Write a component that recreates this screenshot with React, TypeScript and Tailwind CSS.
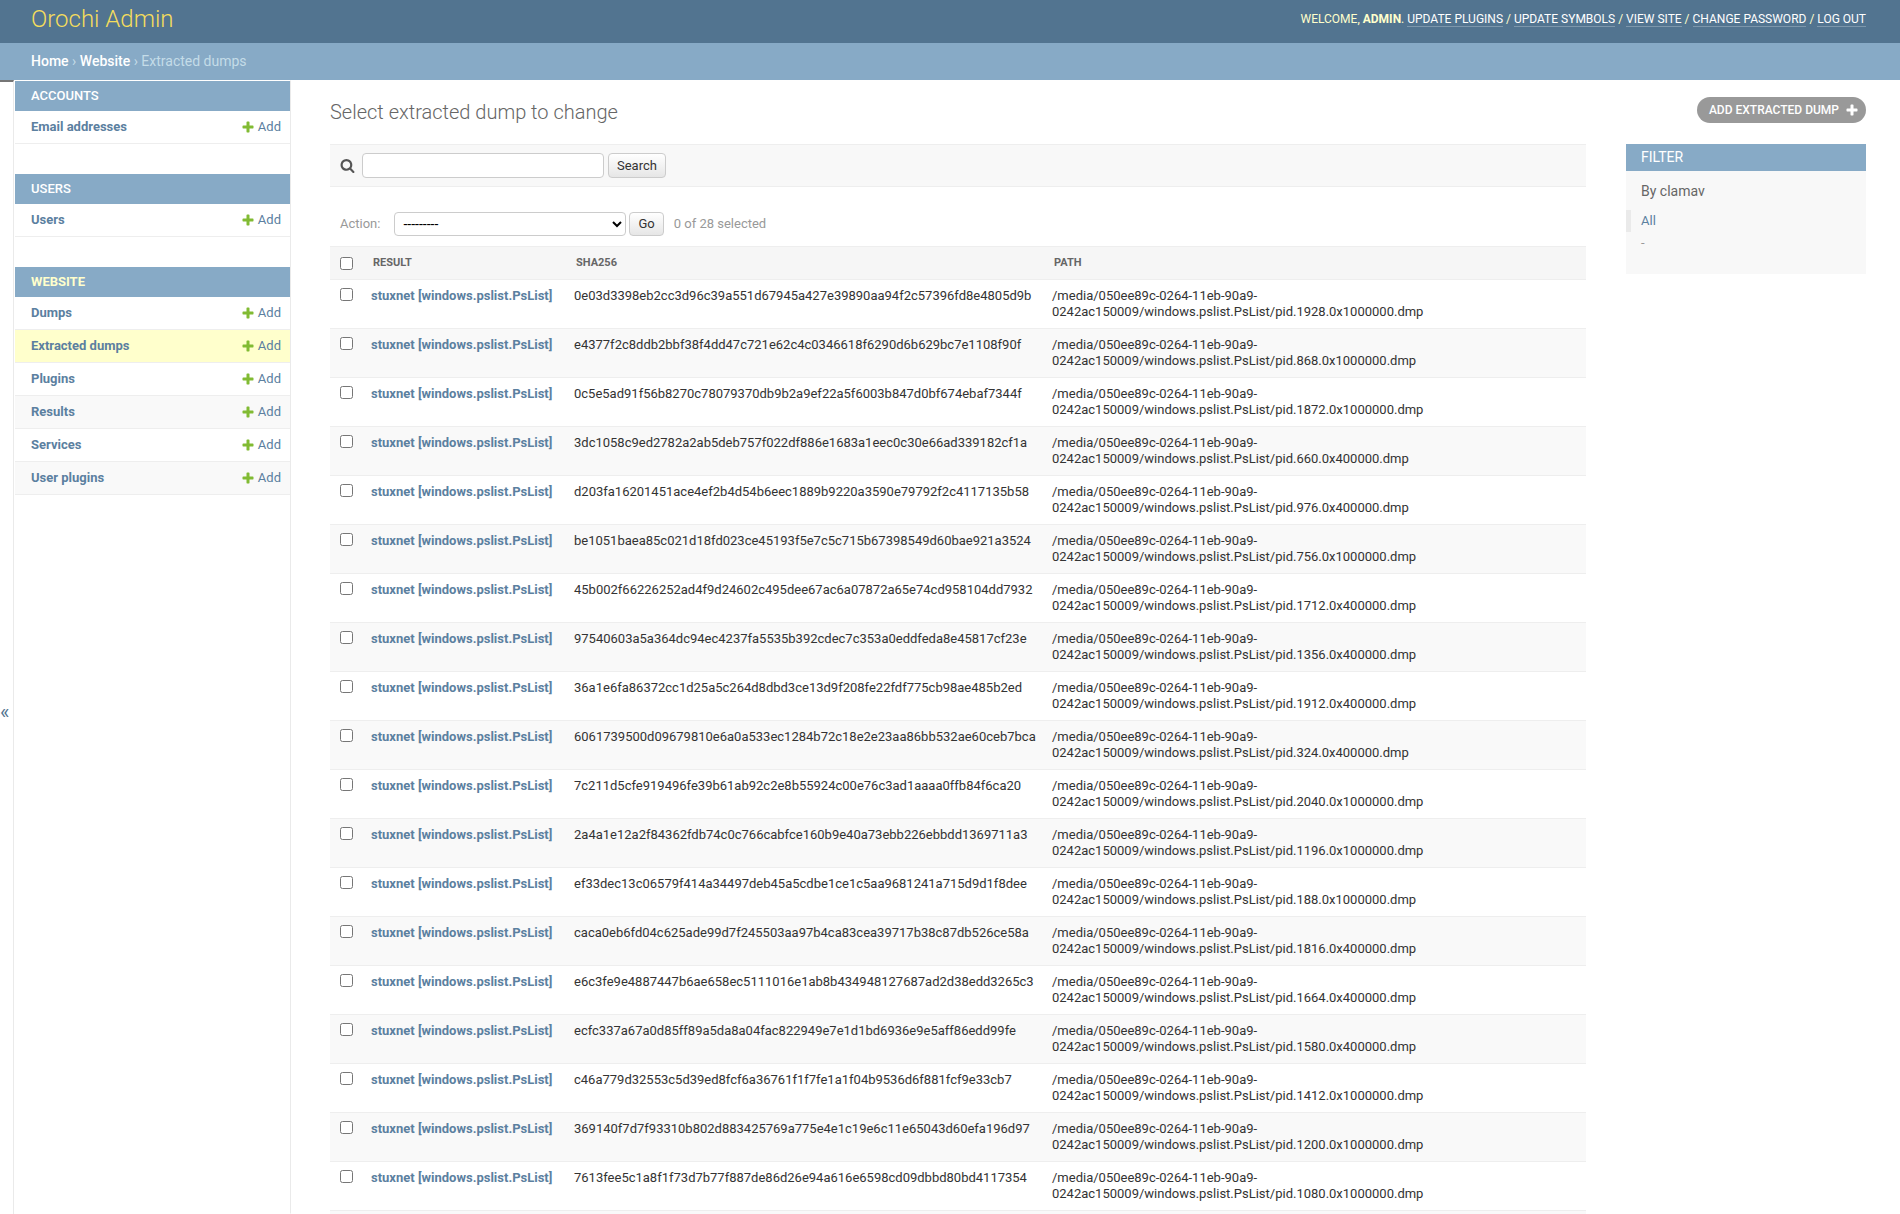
import clsx from "clsx"

const userLinks = ["Update plugins", "Update symbols", "View site", "Change password", "Log out"]

const apps = [
  { name: "Accounts", models: ["Email addresses"] },
  { name: "Users", models: ["Users"] },
  {
    name: "Website",
    current: true,
    models: ["Dumps", "Extracted dumps", "Plugins", "Results", "Services", "User plugins"],
  },
]

const dumps = [
  ["0e03d3398eb2cc3d96c39a551d67945a427e39890aa94f2c57396fd8e4805d9b", "pid.1928.0x1000000.dmp"],
  ["e4377f2c8ddb2bbf38f4dd47c721e62c4c0346618f6290d6b629bc7e1108f90f", "pid.868.0x1000000.dmp"],
  ["0c5e5ad91f56b8270c78079370db9b2a9ef22a5f6003b847d0bf674ebaf7344f", "pid.1872.0x1000000.dmp"],
  ["3dc1058c9ed2782a2ab5deb757f022df886e1683a1eec0c30e66ad339182cf1a", "pid.660.0x400000.dmp"],
  ["d203fa16201451ace4ef2b4d54b6eec1889b9220a3590e79792f2c4117135b58", "pid.976.0x400000.dmp"],
  ["be1051baea85c021d18fd023ce45193f5e7c5c715b67398549d60bae921a3524", "pid.756.0x1000000.dmp"],
  ["45b002f66226252ad4f9d24602c495dee67ac6a07872a65e74cd958104dd7932", "pid.1712.0x400000.dmp"],
  ["97540603a5a364dc94ec4237fa5535b392cdec7c353a0eddfeda8e45817cf23e", "pid.1356.0x400000.dmp"],
  ["36a1e6fa86372cc1d25a5c264d8dbd3ce13d9f208fe22fdf775cb98ae485b2ed", "pid.1912.0x400000.dmp"],
  ["6061739500d09679810e6a0a533ec1284b72c18e2e23aa86bb532ae60ceb7bca", "pid.324.0x400000.dmp"],
  ["7c211d5cfe919496fe39b61ab92c2e8b55924c00e76c3ad1aaaa0ffb84f6ca20", "pid.2040.0x1000000.dmp"],
  ["2a4a1e12a2f84362fdb74c0c766cabfce160b9e40a73ebb226ebbdd1369711a3", "pid.1196.0x1000000.dmp"],
  ["ef33dec13c06579f414a34497deb45a5cdbe1ce1c5aa9681241a715d9d1f8dee", "pid.188.0x1000000.dmp"],
  ["caca0eb6fd04c625ade99d7f245503aa97b4ca83cea39717b38c87db526ce58a", "pid.1816.0x400000.dmp"],
  ["e6c3fe9e4887447b6ae658ec5111016e1ab8b434948127687ad2d38edd3265c3", "pid.1664.0x400000.dmp"],
  ["ecfc337a67a0d85ff89a5da8a04fac822949e7e1d1bd6936e9e5aff86edd99fe", "pid.1580.0x400000.dmp"],
  ["c46a779d32553c5d39ed8fcf6a36761f1f7fe1a1f04b9536d6f881fcf9e33cb7", "pid.1412.0x1000000.dmp"],
  ["369140f7d7f93310b802d883425769a775e4e1c19e6c11e65043d60efa196d97", "pid.1200.0x1000000.dmp"],
  ["7613fee5c1a8f1f73d7b77f887de86d26e94a616e6598cd09dbbd80bd4117354", "pid.1080.0x1000000.dmp"],
]

const PlusIcon = ({ className }: { className?: string }) => (
  <svg viewBox="0 0 1792 1792" className={className} fill="currentColor" aria-hidden="true">
    <path d="M1600 796v192q0 40-28 68t-68 28h-416v416q0 40-28 68t-68 28h-192q-40 0-68-28t-28-68v-416h-416q-40 0-68-28t-28-68v-192q0-40 28-68t68-28h416v-416q0-40 28-68t68-28h192q40 0 68 28t28 68v416h416q40 0 68 28t28 68z" />
  </svg>
)

const SearchIcon = () => (
  <svg viewBox="0 0 1792 1792" className="size-[15px]" fill="#555555" aria-hidden="true">
    <path d="M1216 832q0-185-131.5-316.5t-316.5-131.5-316.5 131.5-131.5 316.5 131.5 316.5 316.5 131.5 316.5-131.5 131.5-316.5zm512 832q0 52-38 90t-90 38q-54 0-90-38l-343-342q-179 124-399 124-143 0-273.5-55.5t-225-150-150-225-55.5-273.5 55.5-273.5 150-225 225-150 273.5-55.5 273.5 55.5 225 150 150 225 55.5 273.5q0 220-124 399l343 343q37 37 37 90z" />
  </svg>
)

const Header = () => (
  <header className="flex h-[43px] flex-none items-center justify-between bg-[#527490] pr-[34px] pb-[6px] pl-[31px] text-[#ffffcc]">
    <a href="#" className="text-2xl font-light text-[#f5dd5d]">
      Orochi Admin
    </a>
    <div className="text-xs leading-4 uppercase">
      Welcome, <strong>admin</strong>.{" "}
      {userLinks.map((link, i) => (
        <span key={link}>
          {i > 0 && " / "}
          <a href="#" className="border-b border-white/25 text-white">
            {link}
          </a>
        </span>
      ))}
    </div>
  </header>
)

const Breadcrumbs = () => (
  <nav aria-label="Breadcrumbs" className="flex h-[37px] flex-none items-center bg-[#87aac6] pb-[2px] pl-[31px] text-sm text-[#c4dce8]">
    <div>
      <a href="#" className="font-medium text-white">
        Home
      </a>{" "}
      ›{" "}
      <a href="#" className="font-medium text-white">
        Website
      </a>{" "}
      › Extracted dumps
    </div>
  </nav>
)

const Sidebar = () => (
  <nav aria-label="Applications" className="w-[277px] flex-none border border-transparent border-r-[#eaeaea]">
    {apps.map((app) => (
      <section key={app.name} className="mb-[30px]">
        <h2 className="bg-[#87aac6] px-4 text-[13px] leading-[30px] font-medium text-white uppercase">
          <a href="#" className={clsx(app.current && "font-bold text-[#ffffcc]")}>
            {app.name}
          </a>
        </h2>
        <ul>
          {app.models.map((model, i) => (
            <li
              key={model}
              className={clsx(
                "flex h-[33px] items-center justify-between border-b border-[#eeeeee] pr-[9px] pl-4 text-[13px]",
                model === "Extracted dumps" ? "bg-[#ffffcc]" : i % 2 === 1 && "bg-[#f9f9f9]",
              )}
            >
              <a href="#" className="font-bold">
                {model}
              </a>
              <a href="#" aria-label={`Add ${model}`} className="flex items-center gap-[3px]">
                <PlusIcon className="size-3.5 text-[#81bb33]" />
                Add
              </a>
            </li>
          ))}
        </ul>
      </section>
    ))}
  </nav>
)

const Toolbar = () => (
  <form className="flex h-[43px] items-center border-y border-[#eeeeee] bg-[#f8f8f8] px-[10px]">
    <label htmlFor="searchbar" className="mr-[7px]">
      <SearchIcon />
    </label>
    <input
      id="searchbar"
      type="text"
      aria-label="Search"
      className="mr-1 h-[25px] w-[242px] rounded border border-[#cccccc] bg-white px-1.5"
    />
    <button type="button" className="h-[25px] rounded border border-[#cccccc] bg-linear-to-b from-white to-[#e6e6e6] px-2 text-[#333333]">
      Search
    </button>
  </form>
)

const Actions = () => (
  <div className="mt-5 mb-[5px] flex h-[34px] items-center px-[10px] text-[#999999]">
    <label htmlFor="action" className="mr-[14px]">
      Action:
    </label>
    <select
      id="action"
      className="mr-[3px] h-6 w-[232px] rounded border border-[#cccccc] bg-white pl-1 text-sm text-black"
    >
      <option>---------</option>
      <option>Delete selected extracted dumps</option>
    </select>
    <button type="button" className="mr-[10px] h-6 rounded border border-[#cccccc] bg-linear-to-b from-white to-[#e6e6e6] px-2 text-[#333333]">
      Go
    </button>
    <span>0 of 28 selected</span>
  </div>
)

const DumpTable = () => (
  <table className="w-full border-collapse text-left leading-4">
    <colgroup>
      <col className="w-[33px]" />
      <col className="w-[203px]" />
      <col className="w-[478px]" />
      <col />
    </colgroup>
    <thead>
      <tr className="h-[33px] border-y border-[#eeeeee] bg-[#f6f6f6] text-[11px] text-[#666666] uppercase">
        <th className="pl-[10px]">
          <input type="checkbox" aria-label="Select all" className="block size-[13px]" />
        </th>
        <th className="px-[10px]">Result</th>
        <th className="px-[10px]">SHA256</th>
        <th className="px-[10px]">Path</th>
      </tr>
    </thead>
    <tbody className="text-[#333333]">
      {dumps.map(([sha, file], i) => (
        <tr key={sha} className={clsx("border-b border-[#eeeeee] align-top", i % 2 === 1 && "bg-[#f9f9f9]")}>
          <td className="py-2 pl-[10px]">
            <input type="checkbox" aria-label={`Select ${file}`} className="block size-[13px]" />
          </td>
          <th className="p-2 whitespace-nowrap">
            <a href="#" className="text-[#5b80a0]">
              stuxnet [windows.pslist.PsList]
            </a>
          </th>
          <td className="p-2">{sha}</td>
          <td className="p-2">/media/050ee89c-0264-11eb-90a9-0242ac150009/windows.pslist.PsList/{file}</td>
        </tr>
      ))}
      <tr className="h-12 bg-[#f9f9f9]">
        <td colSpan={4} />
      </tr>
    </tbody>
  </table>
)

const Filter = () => (
  <aside className="w-60 flex-none self-start bg-[#f8f8f8] pb-5">
    <h2 className="bg-[#87aac6] px-[15px] text-sm leading-[27px] text-white uppercase">Filter</h2>
    <h3 className="mt-[10px] mb-2 px-[15px] text-sm leading-[21px] text-[#666666]">By clamav</h3>
    <ul className="leading-[22px]">
      <li className="border-l-[5px] border-[#eaeaea] pl-[10px]">
        <a href="#">All</a>
      </li>
      <li className="pl-[15px] text-[#999999]">
        <a href="#">-</a>
      </li>
    </ul>
  </aside>
)

export default function App() {
  return (
    <div className="flex h-screen flex-col overflow-hidden bg-white font-[Roboto,sans-serif] text-[13px] text-[#5b80a0]">
      <Header />
      <Breadcrumbs />
      <div className="flex min-h-0 flex-1">
        <button
          type="button"
          aria-label="Toggle navigation"
          className="flex h-[104vh] w-[14px] flex-none items-center border-t-2 border-r border-t-[#767676] border-r-[#eaeaea] text-xl text-[#527490]"
        >
          «
        </button>
        <Sidebar />
        <main className="min-w-0 flex-1 pt-[17px] pr-[34px] pl-[39px]">
          <div className="mb-[21px] flex h-[26px] items-center justify-between">
            <h1 className="mt-1 text-xl font-light text-[#666666]">Select extracted dump to change</h1>
            <a
              href="#"
              className="flex h-[26px] items-center gap-[6px] rounded-full bg-[#999999] pr-[7px] pl-3 text-xs font-medium text-white uppercase"
            >
              Add extracted dump
              <PlusIcon className="size-3.5" />
            </a>
          </div>
          <div className="flex gap-10">
            <div className="min-w-0 flex-1">
              <Toolbar />
              <Actions />
              <DumpTable />
            </div>
            <Filter />
          </div>
        </main>
      </div>
    </div>
  )
}
